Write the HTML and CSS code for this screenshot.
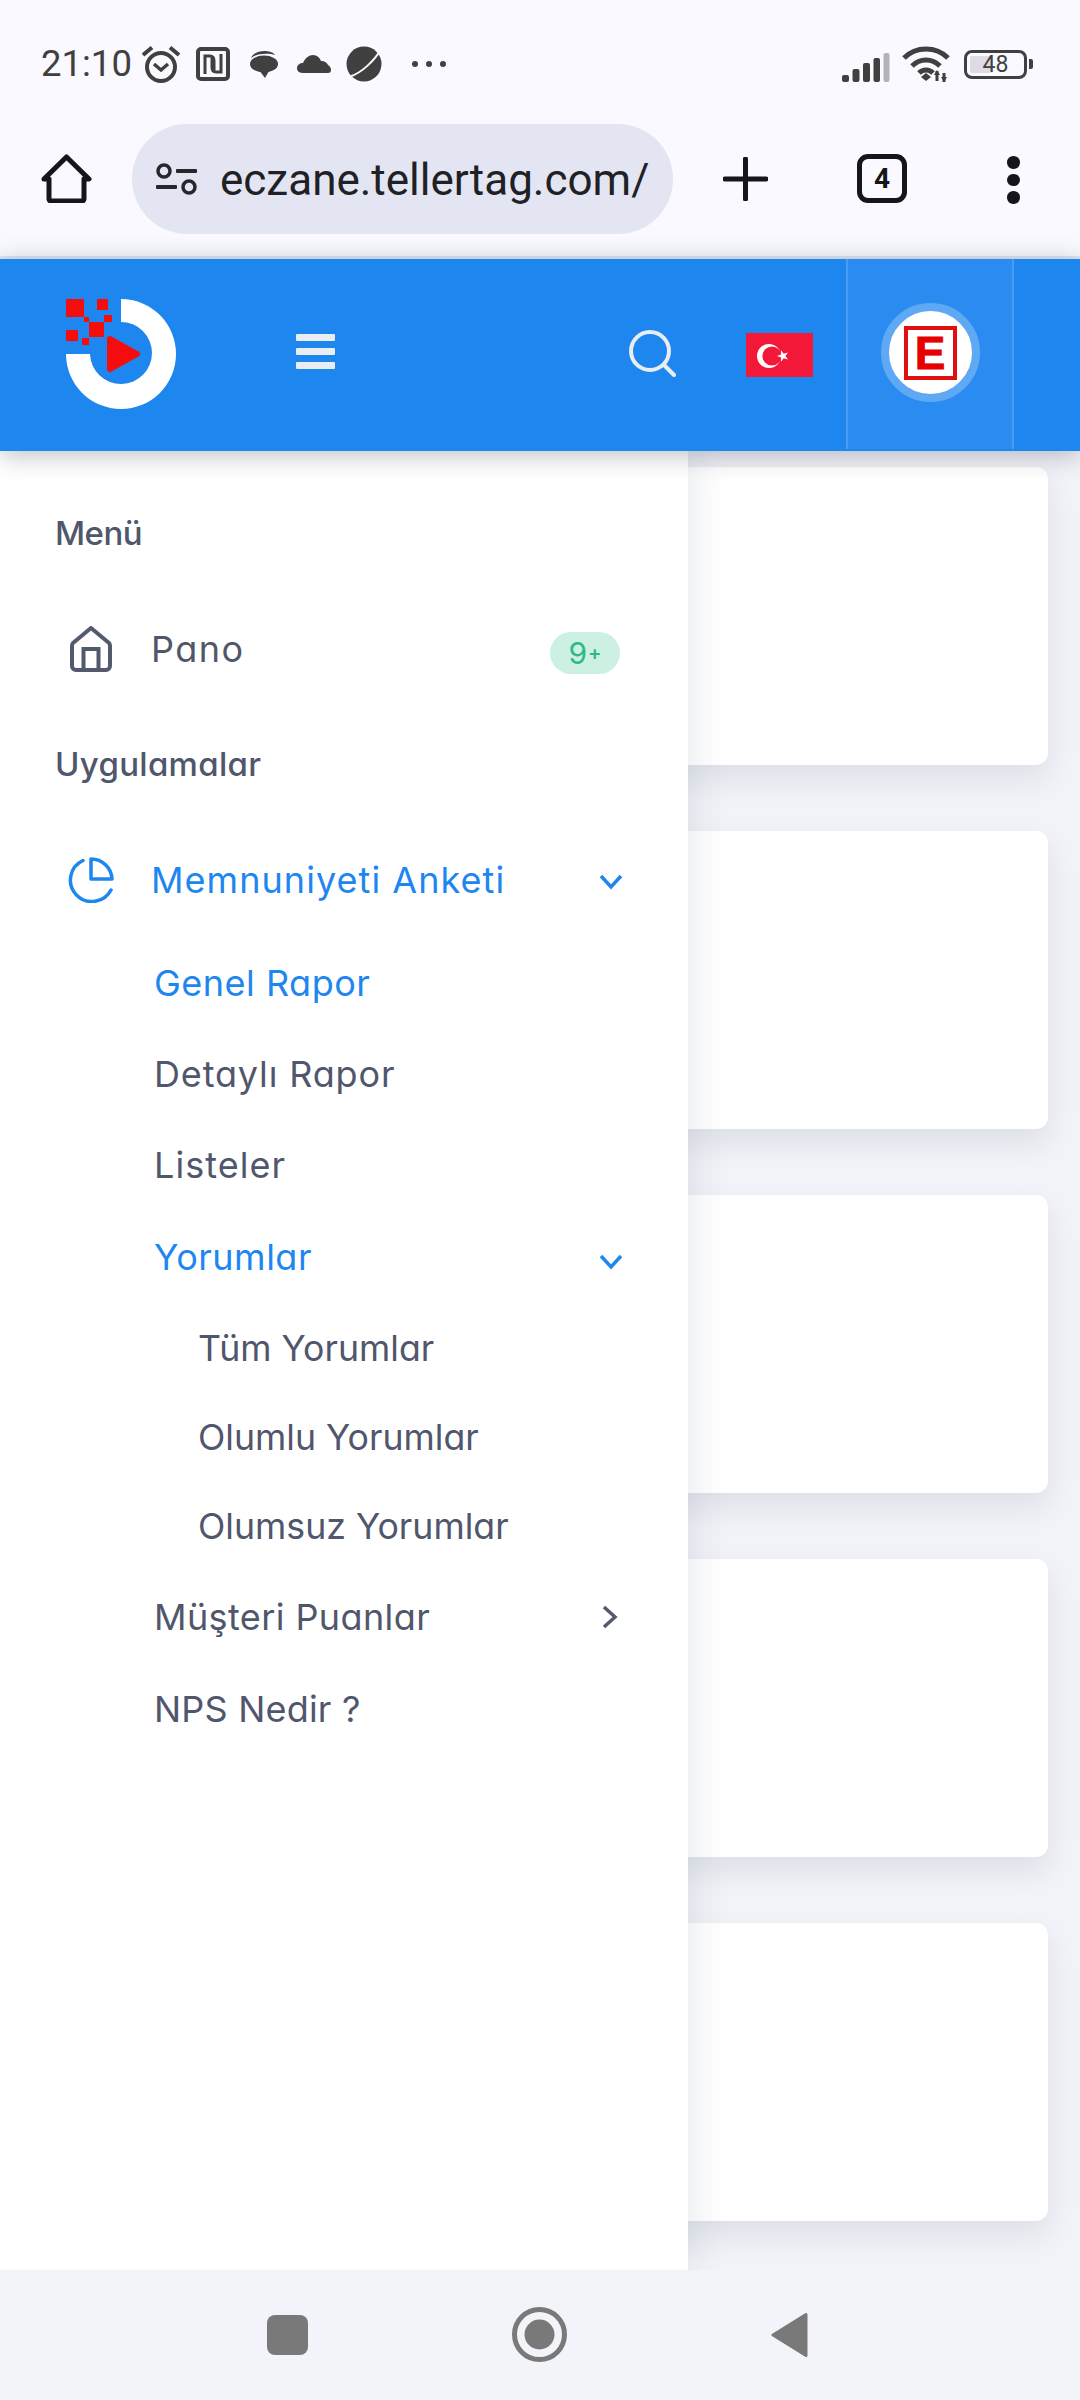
FILE: index.html
```html
<!DOCTYPE html>
<html lang="tr">
<head>
<meta charset="utf-8">
<title>eczane.tellertag.com</title>
<link rel="stylesheet" href="styles.css">
</head>
<body>
<div class="phone">
  <div class="chrome">
    <div class="status">
      <div class="status-left">
        <span class="clock">21:10</span>
        <svg class="si si-alarm" viewBox="0 0 40 38"><circle cx="20" cy="22" r="14" fill="none" stroke="#404040" stroke-width="4"/><path d="M13 19l7 6 7-6" fill="none" stroke="#404040" stroke-width="3.5"/><path d="M2 10L11 2.500M38 10L29 2.500" fill="none" stroke="#404040" stroke-width="4"/></svg>
        <svg class="si si-nfc" viewBox="0 0 34 34"><rect x="2" y="2" width="30" height="30" rx="3" fill="none" stroke="#404040" stroke-width="4"/><path d="M9 27V9h5c3 0 4 2 4 5v10M25 7v18h-5c-3 0-4-2-4-5V10" fill="none" stroke="#404040" stroke-width="3"/></svg>
        <svg class="si si-chat" viewBox="0 0 28 27"><path d="M1 7C3 2 9 0 14 0s9 1 11 4C19 2 7 2 1 7z" fill="#404040"/><ellipse cx="14" cy="13" rx="14" ry="8.500" fill="#404040"/><path d="M9 19l6 8 4-7z" fill="#404040"/></svg>
        <svg class="si si-cloud" viewBox="0 0 34 18"><path d="M6 18C1 18 0 15 0 13c0-3 3-5 6-5 2-5 6-8 10-8s7 3 8 6c4 0 6 2 7 4 2 1 3 3 3 5s-1 3-3 3z" fill="#404040"/></svg>
        <svg class="si si-planet" viewBox="0 0 37 36"><circle cx="18" cy="18" r="17.500" fill="#404040"/><path d="M3 31C16 27 29 14 35 3" fill="none" stroke="#f9f9ff" stroke-width="2"/></svg>
        <span class="more"><i></i><i></i><i></i></span>
      </div>
      <div class="status-right">
        <svg class="si si-signal" viewBox="0 0 48 30"><rect x="0" y="23" width="7" height="7" rx="2" fill="#404040"/><rect x="10.500" y="17" width="7" height="13" rx="2" fill="#404040"/><rect x="21" y="11" width="7" height="19" rx="2" fill="#404040"/><rect x="31.500" y="6" width="6.500" height="24" rx="2" fill="#404040"/><rect x="41.500" y="1" width="6" height="29" rx="2" fill="#b3b3b7"/></svg>
        <svg class="si si-wifi" viewBox="0 0 48 36"><path d="M2 12C14 0 34 0 46 12M10 20c8-8 20-8 28 0M17 27c4-4 10-4 14 0" fill="none" stroke="#404040" stroke-width="5"/><path d="M19 31l5-4 5 4-5 4z" fill="#404040"/><path d="M35 25v10M42 27v9" stroke="#404040" stroke-width="3"/><path d="M32 29l3-5 3 5zM39 31l3 5 3-5z" fill="#404040"/></svg>
        <div class="battery"><div class="battery-shell"><div class="battery-fill"></div><span class="battery-num">48</span></div><div class="battery-tip"></div></div>
      </div>
    </div>
    <div class="toolbar">
      <svg class="tb-home" viewBox="0 0 51 49"><path d="M25.500 3L48 25h-5v20a2 2 0 0 1-2 2H10a2 2 0 0 1-2-2V25H3z" fill="none" stroke="#14161a" stroke-width="5" stroke-linejoin="round"/></svg>
      <div class="omnibox">
        <svg class="tune" viewBox="0 0 41 32"><circle cx="8" cy="8" r="6" fill="none" stroke="#25272b" stroke-width="3.500"/><rect x="20" y="6" width="21" height="4" rx="1" fill="#25272b"/><rect x="0" y="22" width="21" height="4" rx="1" fill="#25272b"/><circle cx="33" cy="24" r="6" fill="none" stroke="#25272b" stroke-width="3.500"/></svg>
        <span class="url">eczane.tellertag.com/</span>
      </div>
      <svg class="tb-plus" viewBox="0 0 45 44"><path d="M22.500 2v40M2 22h41" stroke="#14161a" stroke-width="5" stroke-linecap="round"/></svg>
      <div class="tabs"><span>4</span></div>
      <div class="kebab"><i></i><i></i><i></i></div>
    </div>
  </div>

  <header class="topbar">
    <div class="topbar-left">
      <svg class="logo" viewBox="0 0 110 110"><path d="M55 0a55 55 0 1 1-55 55h24a31 31 0 1 0 31-32z" fill="#fff"/><g fill="#f50d0d"><rect x="0" y="0" width="18" height="18"/><rect x="31" y="0" width="11" height="11"/><rect x="18" y="18" width="5" height="5"/><rect x="38" y="16" width="8" height="7"/><rect x="23" y="23" width="15" height="15"/><rect x="0" y="31" width="12" height="11"/><rect x="16" y="39" width="7" height="7"/><path d="M44 40L71 55 44 70z" stroke="#f50d0d" stroke-width="6" stroke-linejoin="round"/></g></svg>
      <div class="burger"><i></i><i></i><i></i></div>
    </div>
    <div class="topbar-right">
      <svg class="search" viewBox="0 0 47 47"><circle cx="21" cy="21" r="19" fill="none" stroke="#e9edf2" stroke-width="4"/><path d="M35 35l10 10" stroke="#e9edf2" stroke-width="4" stroke-linecap="round"/></svg>
      <svg class="flag" viewBox="0 0 67 44"><rect width="67" height="44" fill="#f31837"/><circle cx="23" cy="23" r="12" fill="#fff"/><circle cx="26" cy="23" r="9.600" fill="#f31837"/><polygon transform="rotate(-90 37 23)" points="37,17 38.400,21 42.700,21.100 39.300,23.700 40.500,27.900 37,25.500 33.500,27.900 34.700,23.700 31.300,21.100 35.600,21" fill="#fff"/></svg>
      <div class="profile">
        <div class="avatar"><div class="e-box"><span>E</span></div></div>
      </div>
    </div>
  </header>

  <main class="main">
    <div class="cards">
      <div class="card"></div>
      <div class="card"></div>
      <div class="card"></div>
      <div class="card"></div>
      <div class="card"></div>
    </div>
    <aside class="drawer">
      <div class="sec-title sec-first">Menü</div>
      <a class="row">
        <svg class="ic-home" viewBox="0 0 42 46"><path d="M21 2L39 17q1 1 1 3v20a4 4 0 0 1-4 4H6a4 4 0 0 1-4-4V20q0-2 1-3z" fill="none" stroke="#545a6d" stroke-width="4" stroke-linejoin="round"/><path d="M13.500 44V23h15v21" fill="none" stroke="#545a6d" stroke-width="4"/></svg>
        <span class="row-label label-pano">Pano</span>
        <span class="badge">9<small>+</small></span>
      </a>
      <div class="sec-title sec-apps">Uygulamalar</div>
      <a class="row row-active">
        <svg class="ic-pie" viewBox="0 0 46 46"><path d="M15 3.500A21.500 21.500 0 1 0 43 33" fill="none" stroke="#1e86ef" stroke-width="3.500" stroke-linecap="round"/><path d="M23 2A21 21 0 0 1 44 22H23z" fill="none" stroke="#1e86ef" stroke-width="3.500" stroke-linejoin="round"/></svg>
        <span class="row-label">Memnuniyeti Anketi</span>
        <svg class="chev chev-top" viewBox="0 0 24 16"><path d="M2 2l10 11L22 2" fill="none" stroke="#1e86ef" stroke-width="3.500"/></svg>
      </a>
      <a class="sub sub-first sub-active"><span>Genel Rapor</span></a>
      <a class="sub"><span class="ls-detay">Detaylı Rapor</span></a>
      <a class="sub"><span class="ls-liste">Listeler</span></a>
      <a class="sub sub-active"><span>Yorumlar</span><svg class="chev chev-sub" viewBox="0 0 24 16"><path d="M2 2l10 11L22 2" fill="none" stroke="#1e86ef" stroke-width="3.500"/></svg></a>
      <a class="third third-first">Tüm Yorumlar</a>
      <a class="third">Olumlu Yorumlar</a>
      <a class="third">Olumsuz Yorumlar</a>
      <a class="sub sub-after"><span class="ls-must">Müşteri Puanlar</span><svg class="chev-r" viewBox="0 0 24 24"><path d="M5 2l11 10L5 22" fill="none" stroke="#545a6d" stroke-width="3.500"/></svg></a>
      <a class="sub"><span class="ls-nps">NPS Nedir ?</span></a>
    </aside>
  </main>

  <nav class="navbar">
    <div class="nav-square"></div>
    <svg class="nav-circle" viewBox="0 0 55 55"><circle cx="27.500" cy="27.500" r="25" fill="none" stroke="#797979" stroke-width="5"/><circle cx="27.500" cy="27.500" r="15" fill="#797979"/></svg>
    <svg class="nav-back" viewBox="0 0 38 46"><path d="M35 2.500v41L2 23z" fill="#797979" stroke="#797979" stroke-width="3" stroke-linejoin="round"/></svg>
  </nav>
</div>
</body>
</html>
```
FILE: styles.css
```css
* { box-sizing: border-box; }
html, body { margin: 0; padding: 0; }
body { width: 1080px; height: 2400px; overflow: hidden; background: #f2f3f8; font-family: Inter, "Liberation Sans", sans-serif; }
a { display: flex; text-decoration: none; }
.phone { width: 1080px; height: 2400px; display: flex; flex-direction: column; }

/* system chrome */
.chrome { height: 259px; background: #f9f9ff; border-bottom: 3px solid #dfe6f1; flex: none; }
.status { height: 124px; padding: 45px 47px 0 41px; display: flex; justify-content: space-between; align-items: flex-start; }
.status-left, .status-right { display: flex; align-items: center; height: 38px; }
.clock { font: 400 36.500px/38px Roboto, sans-serif; color: #404040; }
.si { display: block; flex: none; }
.si-alarm { width: 40px; height: 38px; margin-left: 9px; }
.si-nfc { width: 34px; height: 34px; margin-left: 15px; }
.si-chat { width: 28px; height: 27px; margin-left: 20px; }
.si-cloud { width: 34px; height: 18px; margin-left: 19px; }
.si-planet { width: 37px; height: 36px; margin-left: 15px; }
.more { display: flex; gap: 8px; margin-left: 29px; }
.more i { width: 6px; height: 6px; border-radius: 50%; background: #404040; }
.si-signal { width: 48px; height: 30px; margin-top: 5px; }
.si-wifi { width: 48px; height: 36px; margin-left: 12px; }
.battery { display: flex; align-items: center; margin-left: 14px; }
.battery-shell { position: relative; width: 63px; height: 29px; border: 3.500px solid #404040; border-radius: 8px; display: flex; align-items: center; justify-content: center; }
.battery-fill { position: absolute; left: 3px; top: 3px; bottom: 3px; width: 22px; background: #dcdce2; border-radius: 2px; }
.battery-num { position: relative; font: 400 23px/1 Roboto, sans-serif; color: #404040; }
.battery-tip { width: 4px; height: 10px; margin-left: 2px; background: #404040; border-radius: 0 2px 2px 0; }

.toolbar { display: flex; align-items: flex-start; padding-left: 41px; }
.tb-home { width: 51px; height: 49px; margin-top: 30px; flex: none; }
.omnibox { width: 541px; height: 110px; margin-left: 40px; background: #e3e6f2; border-radius: 55px; display: flex; align-items: center; padding-left: 24px; flex: none; }
.tune { width: 41px; height: 32px; flex: none; }
.url { margin-left: 23px; padding-top: 2px; font: 400 44px/1 Roboto, sans-serif; color: #1f2125; white-space: nowrap; }
.tb-plus { width: 45px; height: 44px; margin: 33px 0 0 50px; flex: none; }
.tabs { width: 50px; height: 49px; margin: 30px 0 0 89px; border: 5px solid #14161a; border-radius: 11px; display: flex; align-items: center; justify-content: center; flex: none; }
.tabs span { font: 700 28px/1 Roboto, sans-serif; color: #14161a; }
.kebab { display: flex; flex-direction: column; gap: 5px; margin: 32px 0 0 100px; flex: none; }
.kebab i { width: 12.500px; height: 12.500px; border-radius: 50%; background: #14161a; }

/* app header */
.topbar { position: relative; z-index: 3; flex: none; height: 192px; background: #1e86ef; box-shadow: 0 4px 24px rgba(30, 40, 60, .3); display: flex; justify-content: space-between; }
.topbar-left { display: flex; align-items: flex-start; padding-left: 66px; }
.logo { width: 110px; height: 110px; margin-top: 40px; }
.burger { display: flex; flex-direction: column; gap: 7px; margin: 75px 0 0 120px; }
.burger i { display: block; width: 39px; height: 7px; border-radius: 1px; background: #e9edf2; }
.topbar-right { display: flex; align-items: flex-start; padding-right: 66px; }
.search { width: 47px; height: 47px; margin-top: 71px; }
.flag { width: 67px; height: 44px; margin: 74px 0 0 70px; }
.profile { width: 168px; height: 190px; margin-left: 33px; background: #2a8cf0; border-left: 2px solid #4a9cf2; border-right: 2px solid #4a9cf2; display: flex; justify-content: center; padding-top: 44px; }
.avatar { width: 99px; height: 99px; border-radius: 50%; background: #fff; border: 8px solid #5ea8f4; display: flex; align-items: center; justify-content: center; }
.e-box { width: 53px; height: 54px; border: 4px solid #e01010; display: flex; align-items: center; justify-content: center; }
.e-box span { font: 700 46px/1 "Liberation Sans", sans-serif; color: #e60000; -webkit-text-stroke: .8px #e60000; }

/* body */
.main { position: relative; flex: 1; min-height: 0; overflow: hidden; }
.cards { padding: 16px 32px 0; display: flex; flex-direction: column; gap: 66px; }
.card { height: 298px; flex: none; background: #fff; border-radius: 12px; box-shadow: 0 14px 30px rgba(18, 38, 63, .09); }

.drawer { position: absolute; left: 0; top: 0; bottom: 0; width: 688px; background: #fff; box-shadow: 0 0 40px rgba(18, 38, 63, .12); color: #50566b; }
.sec-title { padding-left: 55px; height: 40px; font-size: 33px; line-height: 40px; font-weight: 500; font-feature-settings: "cv11"; }
.sec-first { margin-top: 62px; letter-spacing: -.5px; }
.sec-apps { margin-top: 57px; letter-spacing: .3px; }
.row { height: 76px; align-items: center; padding: 0 65px 0 68px; margin-top: 58px; }
.row-label, .sub span, .third { font-size: 36px; font-feature-settings: "cv11"; color: #50566b; }
.row-label { margin-left: 40px; flex: 1; letter-spacing: 1.050px; }
.label-pano { letter-spacing: 1.500px; }
.ic-home { width: 42px; height: 46px; margin-left: 2px; margin-right: -1px; }
.ic-pie { width: 46px; height: 46px; margin-right: -3px; }
.badge { margin: 8px 3px 0 0; width: 70px; height: 42px; border-radius: 21px; background: #ccf1e2; color: #2fb986; font-size: 30px; line-height: 42px; display: flex; justify-content: center; font-feature-settings: "cv11"; }
.badge small { font-size: 20px; font-weight: 600; margin-left: 1px; }
.chev { width: 24px; height: 16px; flex: none; }
.chev-top { margin-top: 4px; }
.chev-sub { margin-top: 10px; }
.chev-r { width: 24px; height: 24px; flex: none; }
.row-active .row-label, .sub-active span { color: #1e86ef; }
.sub { height: 91.400px; align-items: center; justify-content: space-between; padding: 0 65px 0 154px; }
.sub span { letter-spacing: .5px; }
.sub .ls-detay { letter-spacing: .85px; }
.sub .ls-liste { letter-spacing: 1.050px; }
.sub .ls-must { letter-spacing: .4px; }
.sub .ls-nps { letter-spacing: .2px; }
.sub-first { margin-top: 19px; }
.third { height: 89px; align-items: center; padding-left: 198px; font-size: 35.700px; }
.third-first { margin-top: 1px; }
.sub-after { margin-top: 1px; }

/* nav */
.navbar { flex: none; height: 130px; background: #f3f4f9; display: flex; align-items: flex-start; padding: 37px 0 0 267px; gap: 204px; position: relative; z-index: 4; }
.nav-square { width: 41px; height: 40px; margin-top: 8px; border-radius: 8px; background: #797979; }
.nav-circle { width: 55px; height: 55px; }
.nav-back { width: 38px; height: 46px; margin-top: 5px; }
```
